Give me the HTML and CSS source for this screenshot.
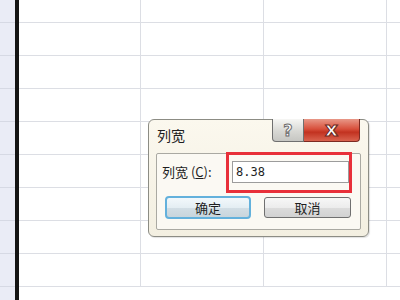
FILE: index.html
```html
<!DOCTYPE html>
<html lang="zh">
<head>
<meta charset="utf-8">
<title>列宽</title>
<link rel="stylesheet" href="styles.css">
</head>
<body>
<div class="sheet">
  <div class="row-headers">
    <div class="rh first"></div><div class="rh"></div><div class="rh"></div><div class="rh"></div><div class="rh"></div><div class="rh"></div><div class="rh"></div><div class="rh"></div><div class="rh"></div>
  </div>
  <div class="divider"></div>
  <div class="cells">
    <div class="c"></div><div class="c"></div><div class="c"></div><div class="c"></div>
    <div class="c"></div><div class="c"></div><div class="c"></div><div class="c"></div>
    <div class="c"></div><div class="c"></div><div class="c"></div><div class="c"></div>
    <div class="c"></div><div class="c"></div><div class="c"></div><div class="c"></div>
    <div class="c"></div><div class="c"></div><div class="c"></div><div class="c"></div>
    <div class="c"></div><div class="c"></div><div class="c"></div><div class="c"></div>
    <div class="c"></div><div class="c"></div><div class="c"></div><div class="c"></div>
    <div class="c"></div><div class="c"></div><div class="c"></div><div class="c"></div>
    <div class="c"></div><div class="c"></div><div class="c"></div><div class="c"></div>
  </div>
</div>

<div class="dialog">
  <div class="titlebar">
    <span class="title">列宽</span>
    <div class="caption-btns">
      <span class="cap help">?</span>
      <span class="cap close">x</span>
    </div>
  </div>
  <div class="panel">
    <div class="field">
      <label class="label">列宽 (<u>C</u>):</label>
      <div class="input">8.38</div>
    </div>
    <div class="actions">
      <button class="btn default">确定</button>
      <button class="btn">取消</button>
    </div>
  </div>
  <div class="highlight"></div>
</div>
</body>
</html>
```

FILE: styles.css
```css
html, body {
  margin: 0;
  padding: 0;
  width: 400px;
  height: 300px;
  overflow: hidden;
  background: #ffffff;
  font-family: "Noto Sans CJK SC", "Noto Sans", sans-serif;
}

.sheet {
  display: flex;
  width: 400px;
  height: 300px;
  overflow: hidden;
}

.row-headers {
  flex: none;
  width: 15px;
  background: #eaecf6;
  display: flex;
  flex-direction: column;
}

.rh {
  height: 33px;
  flex: none;
  box-sizing: border-box;
  border-bottom: 1px solid #d6d9e4;
}

.rh.first { height: 23px; }

.divider {
  flex: none;
  width: 4px;
  background: #141414;
}

.cells {
  flex: none;
  display: grid;
  grid-template-columns: 122px 123px 123px 13px;
  grid-template-rows: 23px;
  grid-auto-rows: 33px;
}

.c {
  box-sizing: border-box;
  border-right: 1px solid #dcdee4;
  border-bottom: 1px solid #dcdee4;
}

.c:nth-child(4n) { border-right: none; }

/* dialog */
.dialog {
  position: absolute;
  left: 148px;
  top: 119px;
  width: 221px;
  height: 118px;
  box-sizing: border-box;
  border: 1px solid #8c8c84;
  border-radius: 6px;
  background: linear-gradient(#fbf8ee, #f3efe1);
  box-shadow: 1px 1px 1px rgba(0,0,0,0.12);
  display: flex;
  flex-direction: column;
}

.titlebar {
  height: 33px;
  display: flex;
  align-items: flex-start;
}

.title {
  margin: 5px 0 0 8px;
  font-size: 14px;
  line-height: 20px;
  color: #1e1e1e;
}

.caption-btns {
  margin: -1px 8px 0 auto;
  display: flex;
  height: 23px;
}

.cap {
  box-sizing: border-box;
  height: 23px;
  display: flex;
  align-items: center;
  justify-content: center;
  font-family: "DejaVu Sans", sans-serif;
  font-weight: bold;
  border: 1px solid #6f6f6f;
  border-top: none;
}

.help {
  width: 32px;
  border-bottom-left-radius: 4px;
  background: linear-gradient(#f6f6f4, #d8d8d4 55%, #c6c6c2);
  color: #ffffff;
  font-size: 16px;
  -webkit-text-stroke: 1px #6c6c6c;
}

.close {
  width: 56px;
  border-left: none;
  border-color: #7c2a22;
  border-bottom-right-radius: 4px;
  background: linear-gradient(#e89888, #d8503c 45%, #c23220 60%, #d9624e);
  color: #ffffff;
  font-size: 20px;
  line-height: 1;
  padding-bottom: 3px;
  -webkit-text-stroke: 1.2px #6e2a22;
}

.panel {
  margin: 0 7px;
  height: 77px;
  box-sizing: border-box;
  border: 1px solid #aaa9a2;
  border-radius: 2px;
  background: #fbf9f3;
  padding: 7px 0 0 5px;
}

.field {
  display: flex;
  align-items: center;
  height: 22px;
}

.label {
  width: 70px;
  font-size: 13px;
  color: #1e1e1e;
  line-height: 22px;
  white-space: nowrap;
}

.input {
  width: 117px;
  height: 22px;
  box-sizing: border-box;
  border: 1px solid #9c9c9c;
  background: #ffffff;
  font-family: "DejaVu Sans Mono", monospace;
  font-size: 12px;
  line-height: 20px;
  padding-left: 3px;
  color: #1e1e1e;
}

.actions {
  display: flex;
  gap: 13px;
  margin-top: 13px;
  padding-left: 3px;
}

.btn {
  width: 86px;
  height: 22px;
  box-sizing: border-box;
  border: 1px solid #707070;
  border-radius: 3px;
  background: linear-gradient(#f7f7f7, #ececec 50%, #dcdcdc 51%, #d2d2d2);
  font-family: "Noto Sans CJK SC", sans-serif;
  font-size: 13px;
  color: #1e1e1e;
  padding: 0;
  line-height: 20px;
}

.btn.default {
  height: 23px;
  border: 2px solid #63b1dc;
  border-radius: 4px;
  background: linear-gradient(#f2f8fb, #e4eef3 50%, #d2dee5 51%, #c8d5dc);
  line-height: 19px;
}

.btn + .btn {
  width: 87px;
  margin-top: 1px;
  height: 21px;
}

.highlight {
  position: absolute;
  left: 77px;
  top: 32px;
  width: 126px;
  height: 41px;
  box-sizing: border-box;
  border: 3px solid #e8303a;
}
```
